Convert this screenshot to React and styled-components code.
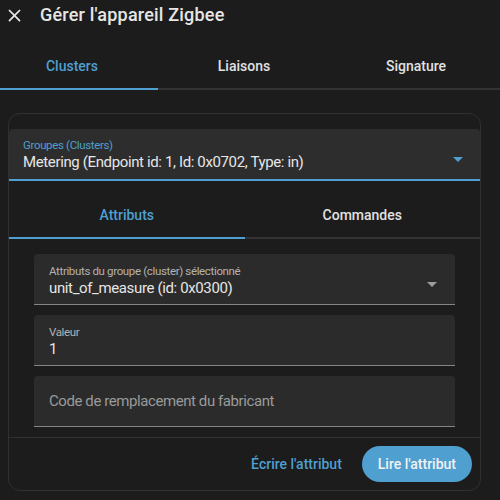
import React from "react";
import styled, { createGlobalStyle } from "styled-components";

const GlobalStyle = createGlobalStyle`
  html, body {
    margin: 0;
    padding: 0;
    background: #1c1c1c;
    font-family: Roboto, "Noto Sans", "Liberation Sans", sans-serif;
    -webkit-font-smoothing: antialiased;
  }
  * { box-sizing: border-box; }
`;

const BLUE = "#4f9fd0";

function Dialog() {
  return (
    <Page>
      <Header>
        <CloseIcon viewBox="0 0 24 24">
          <path
            fill="#e6e6e6"
            d="M19 6.41L17.59 5 12 10.59 6.41 5 5 6.41 10.59 12 5 17.59 6.41 19 12 13.41 17.59 19 19 17.59 13.41 12z"
          />
        </CloseIcon>
        <Title>Gérer l'appareil Zigbee</Title>
      </Header>

      <TabBar>
        <Tab active>Clusters</Tab>
        <Tab>Liaisons</Tab>
        <Tab>Signature</Tab>
      </TabBar>

      <Card>
        <SelectField>
          <FieldText>
            <Label focused>Groupes (Clusters)</Label>
            <Value>Metering (Endpoint id: 1, Id: 0x0702, Type: in)</Value>
          </FieldText>
          <Arrow color={BLUE} />
        </SelectField>

        <SubTabBar>
          <SubTab active>Attributs</SubTab>
          <SubTab>Commandes</SubTab>
        </SubTabBar>

        <Content>
          <Field>
            <FieldText>
              <Label>Attributs du groupe (cluster) sélectionné</Label>
              <Value>unit_of_measure (id: 0x0300)</Value>
            </FieldText>
            <Arrow color="#9e9e9e" />
          </Field>
          <Field>
            <FieldText>
              <Label>Valeur</Label>
              <Value>1</Value>
            </FieldText>
          </Field>
          <Field empty>
            <Placeholder>Code de remplacement du fabricant</Placeholder>
          </Field>
        </Content>

        <Actions>
          <TextButton>Écrire l'attribut</TextButton>
          <FilledButton>Lire l'attribut</FilledButton>
        </Actions>
      </Card>
    </Page>
  );
}

function Arrow({ color }) {
  return (
    <ArrowIcon viewBox="0 0 10 5">
      <polygon points="0,0 10,0 5,5" fill={color} />
    </ArrowIcon>
  );
}

export default function App() {
  return (
    <>
      <GlobalStyle />
      <Dialog />
    </>
  );
}

// Styling
const Page = styled.div`
  width: 500px;
  height: 500px;
  overflow: hidden;
  background: #1c1c1c;
`;

const Header = styled.div`
  display: flex;
  align-items: center;
  gap: 15px;
  height: 30px;
  padding-left: 4px;
`;

const CloseIcon = styled.svg`
  width: 21px;
  height: 21px;
  flex: none;
`;

const Title = styled.div`
  font-size: 18px;
  font-weight: 500;
  line-height: 30px;
  letter-spacing: 0.2px;
  color: #e6e6e6;
`;

const TabBar = styled.div`
  display: flex;
  margin-top: 12px;
  margin-left: -14px;
  width: 516px;
  height: 48px;
  box-shadow: inset 0 -2px 0 #333333;
`;

const Tab = styled.div`
  flex: 0 0 172px;
  display: flex;
  align-items: center;
  justify-content: center;
  font-size: 14px;
  font-weight: 500;
  color: ${(p) => (p.active ? BLUE : "#e1e1e1")};
  box-shadow: ${(p) => (p.active ? `inset 0 -2px 0 ${BLUE}` : "none")};
`;

const Card = styled.div`
  margin: 23px 0 0 8px;
  width: 473px;
  border: 1px solid #303030;
  border-radius: 12px;
  overflow: hidden;
  padding-top: 15px;
`;

const Field = styled.div`
  display: flex;
  align-items: ${(p) => (p.empty ? "center" : "flex-start")};
  height: 51px;
  padding: ${(p) => (p.empty ? "0 18px 0 15px" : "11px 18px 0 15px")};
  background: #2b2b2b;
  border-radius: 4px 4px 0 0;
  border-bottom: 1px solid #858585;
`;

const SelectField = styled(Field)`
  height: 52px;
  padding: 10px 17px 0 14px;
  background: #2d2d2d;
  border-bottom: 2px solid ${BLUE};
`;

const FieldText = styled.div`
  flex: 1;
  min-width: 0;
`;

const Label = styled.div`
  font-size: 11.5px;
  line-height: 13px;
  letter-spacing: -0.35px;
  color: ${(p) => (p.focused ? BLUE : "#b3b3b3")};
`;

const Value = styled.div`
  font-size: 15px;
  line-height: 20px;
  letter-spacing: -0.37px;
  color: #e6e6e6;
  white-space: nowrap;
`;

const Placeholder = styled.div`
  font-size: 15px;
  letter-spacing: -0.42px;
  color: #9a9a9a;
`;

const ArrowIcon = styled.svg`
  flex: none;
  width: 10px;
  height: 5px;
  align-self: center;
`;

const SubTabBar = styled.div`
  display: grid;
  grid-template-columns: 1fr 1fr;
  margin-top: 9px;
  height: 49px;
  box-shadow: inset 0 -2px 0 #333333;
`;

const SubTab = styled(Tab)`
  flex: none;
`;

const Content = styled.div`
  display: flex;
  flex-direction: column;
  gap: 10px;
  padding: 15px 25px 10px;
`;

const Actions = styled.div`
  display: flex;
  justify-content: flex-end;
  gap: 8px;
  padding: 8px;
  border-top: 1px solid #303030;
`;

const TextButton = styled.button`
  height: 36px;
  padding: 0 12px;
  border: none;
  background: none;
  font-family: inherit;
  font-size: 14px;
  font-weight: 500;
  color: ${BLUE};
`;

const FilledButton = styled(TextButton)`
  padding: 0 16px;
  border-radius: 18px;
  background: ${BLUE};
  color: #f2f2f2;
`;
